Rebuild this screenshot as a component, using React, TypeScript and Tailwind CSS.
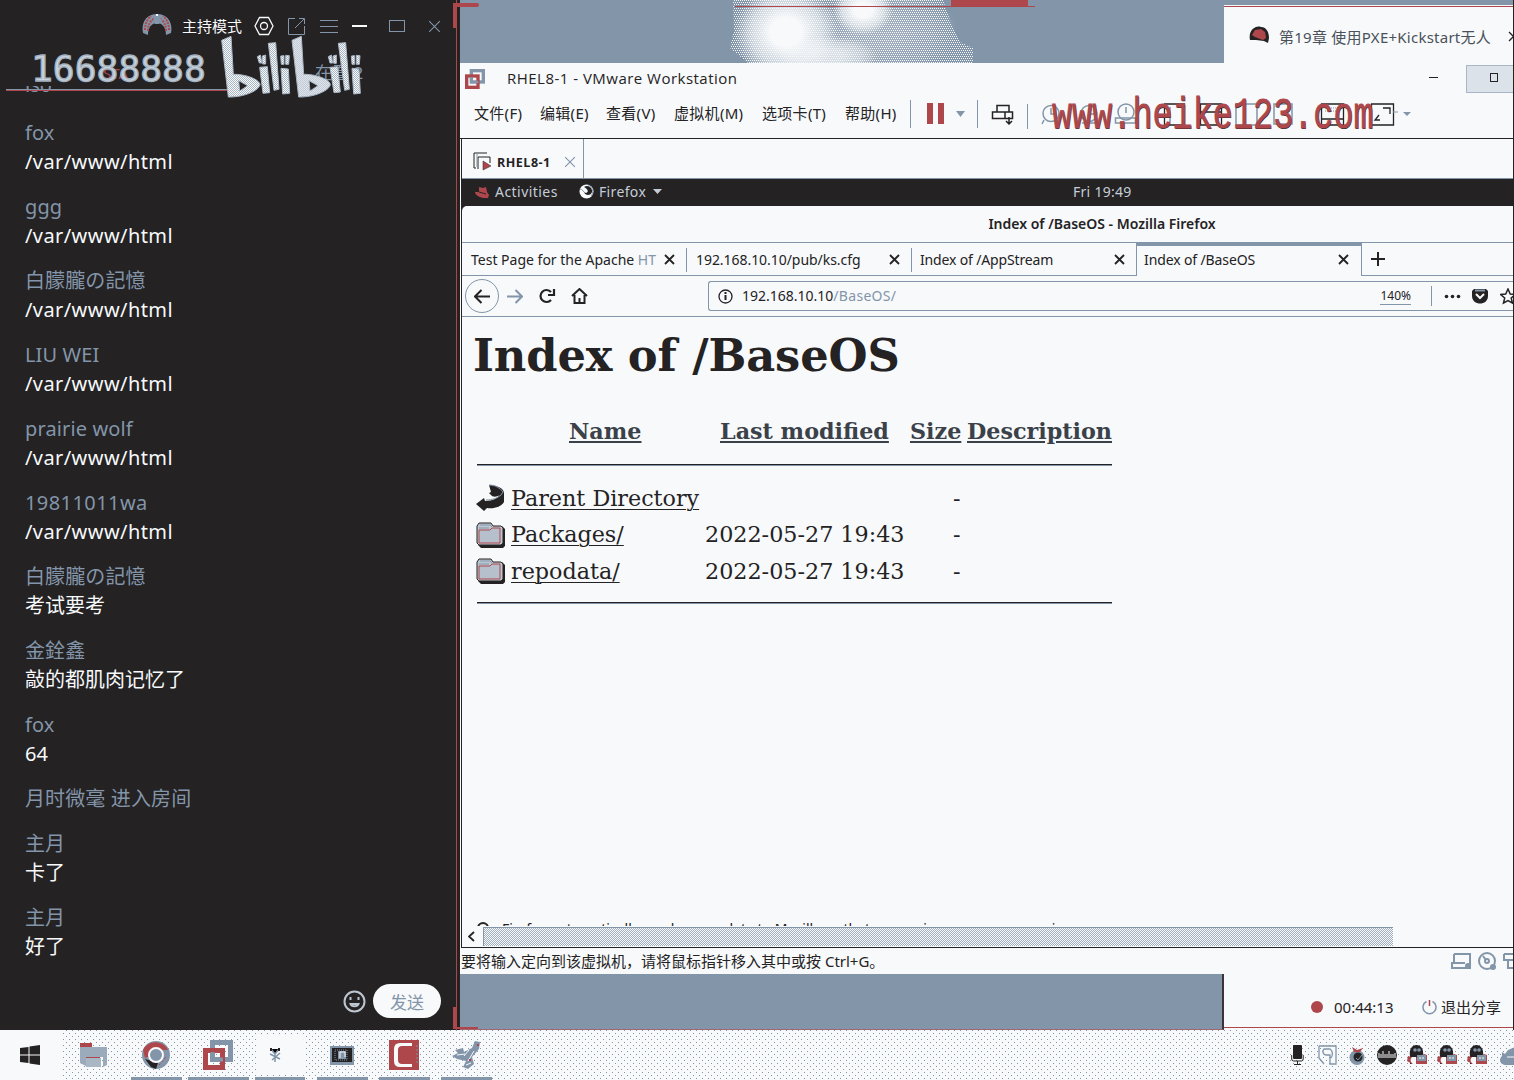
import React from "react";

const messages: { name: string; text?: string }[] = [
  { name: "fox", text: "/var/www/html" },
  { name: "ggg", text: "/var/www/html" },
  { name: "白朦朧の記憶", text: "/var/www/html" },
  { name: "LIU WEI", text: "/var/www/html" },
  { name: "prairie wolf", text: "/var/www/html" },
  { name: "19811011wa", text: "/var/www/html" },
  { name: "白朦朧の記憶", text: "考试要考" },
  { name: "金銓鑫", text: "敲的都肌肉记忆了" },
  { name: "fox", text: "64" },
  { name: "月时微毫 进入房间" },
  { name: "主月", text: "卡了" },
  { name: "主月", text: "好了" },
];

const S = "#8395a9";
const R = "#ad474b";
const D = "#242223";
const W = "#f7f9fb";

function Avatar() {
  return (
    <svg width="30" height="26" viewBox="0 0 30 26">
      <path d="M1 20C-1 10 4 1 15 1s16 9 14 19l-5 2C24 14 20 10 15 10S6 14 6 22z" fill={S} />
      <path d="M3 17C3 10 6 5 9 3M6 18c0-6 2-10 6-12M27 17c0-7-3-12-6-14M24 18c0-6-2-10-6-12" stroke={R} strokeWidth="2" strokeDasharray="2 1" fill="none" />
      <path d="m11 7 4-5 5 5-3 4h-4z" fill={S} />
      <path d="M15 1v2" stroke={W} strokeWidth="2" />
    </svg>
  );
}

function LogoB({ x }: { x: number }) {
  return (
    <path
      transform={`translate(${x} 0)`}
      fillRule="evenodd"
      d="M2 13 30 1 37 115C72 114 115 130 117 145C116 163 70 184 22 183ZM53 134 80 149 56 165Z"
    />
  );
}

function BiliLogo() {
  return (
    <svg width="142" height="64" viewBox="0 0 426 192">
      <defs>
        <pattern id="weave" width="6" height="6" patternUnits="userSpaceOnUse">
          <rect width="6" height="6" fill="#a9b6c4" />
          <rect width="3" height="3" fill={W} />
          <rect x="3" y="3" width="3" height="3" fill={W} />
        </pattern>
      </defs>
      <g fill="url(#weave)" stroke="#a9b6c4" strokeWidth="3">
        <LogoB x={0} />
        <LogoB x={211} />
        <path d="m142 22 22-2 10 140-15 3zM116 94l23-2 7 78-20 2zM109 62l9-5 5 24h-8zM124 60l10-3v27h-9zM180 97l22 2 4 73-21 2zM179 60l10-1v26h-8zM194 58l11 1-2 26h-9z" />
        <path d="m352 22 22-2 11 140-14 3zM327 94l23-2 8 76-19 2zM322 62l9-5 4 24h-8zM336 60l10-3v25h-8zM393 97l21 2 4 73-20 2zM391 60l10-1v26h-8zM406 58l11 1-2 26h-9z" />
      </g>
    </svg>
  );
}

function Cloud() {
  return (
    <svg width="245" height="63" viewBox="0 0 245 63" className="ml-[268px]">
      <defs>
        <pattern id="grain" width="4" height="4" patternUnits="userSpaceOnUse">
          <rect width="1" height="1" fill={W} />
          <rect x="2" width="1" height="1" fill={W} />
          <rect x="1" y="2" width="1" height="1" fill={W} />
          <rect x="3" y="2" width="1" height="1" fill={W} />
        </pattern>
        <radialGradient id="glow">
          <stop offset="0.3" stopColor={W} />
          <stop offset="0.7" stopColor={W} stopOpacity="0.6" />
          <stop offset="1" stopColor={W} stopOpacity="0" />
        </radialGradient>
      </defs>
      <path d="M5 0H215L222 20 232 42 245 48V63H20L2 48 6 30z" fill="url(#grain)" />
      <ellipse cx="58" cy="32" rx="52" ry="48" fill="url(#glow)" />
      <ellipse cx="135" cy="10" rx="30" ry="25" fill="url(#glow)" />
      <ellipse cx="100" cy="56" rx="50" ry="20" fill="url(#glow)" opacity="0.7" />
      <ellipse cx="150" cy="32" rx="80" ry="50" fill="url(#glow)" opacity="0.25" />
    </svg>
  );
}

function VmLogo({ size }: { size: number }) {
  return (
    <svg width={size} height={size} viewBox="0 0 30 30" fill="none">
      <rect x="9.5" y="2.5" width="18" height="17" stroke={S} strokeWidth="5" />
      <rect x="2.5" y="10.500" width="17" height="17" stroke={R} strokeWidth="5" />
      <path d="M9.500 12V19.500H20" stroke={S} strokeWidth="4" />
    </svg>
  );
}

function RedHat({ dark }: { dark?: boolean }) {
  return dark ? (
    <svg width="21" height="18" viewBox="0 0 21 18">
      <path d="M1 14C-1 5 6-1 12 1c6 0 8 6 8 11l-1 5-4-2-8-1z" fill={D} />
      <path d="m6 4 6-1 4 3 1 6-3 2-8-3-3-2z" fill={R} />
    </svg>
  ) : (
    <svg width="14" height="12" viewBox="0 0 14 12">
      <path d="m4 1 4 1 3-1 1 5 2 3-1 3H8C4 11 0 9 0 6h4z" fill={R} />
      <path d="m4 6 7 2" stroke={D} strokeWidth="1" />
    </svg>
  );
}

function CloseX({ c = D, s = 11, w = 2 }: { c?: string; s?: number; w?: number }) {
  return (
    <svg width={s} height={s} viewBox="0 0 11 11" className="shrink-0">
      <path d="m1 1 9 9M10 1l-9 9" stroke={c} strokeWidth={w} />
    </svg>
  );
}

function FolderIcon() {
  return (
    <svg width="29" height="26" viewBox="0 0 29 26">
      <path d="M4 5 2 23l3 3h22l2-2V7l-3-3H17z" fill={D} />
      <path d="M1 4 3 1h12l2 3h8l2 2v15l-2 2H3l-2-2z" fill="#bdc7d1" stroke={D} />
      <path d="M3 8V21h21V6h-8l-2 2z" fill="#b5c0cc" stroke={R} />
      <path d="M4 3h10l2 2M3 6h10" stroke={S} fill="none" />
    </svg>
  );
}

function BackIcon() {
  return (
    <svg width="29" height="28" viewBox="0 0 29 28">
      <path d="M13 1c7 0 15 3 15 8v9c-3 5-10 7-17 6l-3 3-8-7 8-6 1 3c8 0 12-3 15-6-3 2-7 2-8 1l-3-3 2-1z" fill={D} />
      <path d="M13 1c6 0 11 3 14 7l-2 3c-3 3-9 5-15 5" stroke={S} fill="none" />
    </svg>
  );
}

const menus: [string, string][] = [
  ["文件(F)", "w-[66px]"],
  ["编辑(E)", "w-[66px]"],
  ["查看(V)", "w-[68px]"],
  ["虚拟机(M)", "w-[88px]"],
  ["选项卡(T)", "w-[83px]"],
  ["帮助(H)", "w-[65px]"],
];

function ToolIcons() {
  return (
    <svg width="445" height="32" viewBox="0 0 445 32" fill="none" stroke={S} strokeWidth="1.500" className="shrink-0">
      <g stroke={D}>
        <path d="M26 14V7.500h12V14M21.500 14h20v6.500h-20zM34 14v6M38 19v7M35 23l3 3 3-3" />
      </g>
      <path d="M56.500 6v25" strokeWidth="1" />
      <circle cx="80" cy="15.500" r="8" />
      <path d="M80 10v6h5M73 22l-2 4" />
      <circle cx="118" cy="15.500" r="8" />
      <path d="M118 10v6h5M111 25h16" />
      <circle cx="155" cy="14" r="8" />
      <path d="M155 9v6M144.500 20h20v5h-20z" />
      <g stroke={D} strokeWidth="1.300">
        <path d="M193.500 6h20v21h-20zM229.500 6h21v21h-21zM229.500 14h21" />
        <path d="M350.500 6h22v21h-22zM350.500 21h22M400.500 6h22v21h-22zM412 10h7v6M408 17l-4 5h5" />
      </g>
      <path d="M265 6h21v21h-21zM273 6v21M303 6h18v20h-18zM199 9v16" />
      <path d="M354 10h14M354 13h14" strokeDasharray="1 1" strokeWidth="1" />
      <path d="M422 14h5" strokeWidth="1" />
      <path d="M432 14h8l-4 4z" fill={S} stroke="none" />
    </svg>
  );
}

function TitleBar() {
  return (
    <div className="flex h-[31px] items-center bg-[#f7f9fb] rounded-tl-[3px] pl-[5px]">
      <VmLogo size={20} />
      <span className="ml-[22px] whitespace-nowrap font-['Open_Sans'] text-[15px] tracking-[0.48px]">
        RHEL8-1 - VMware Workstation
      </span>
      <span className="ml-auto mr-[28px] -translate-y-px h-px w-[9px] bg-[#242223]" />
      <span className="flex h-[28px] w-[47px] items-center border border-r-0 border-[#a9b6c4] bg-[#dce2e9] pl-[23px] pb-[3px]">
        <span className="h-[9px] w-[8px] border border-[#242223]" />
      </span>
    </div>
  );
}

function MenuBar() {
  return (
    <div className="relative flex h-[45px] items-center overflow-hidden border-b border-[#242223] bg-[#f7f9fb] pl-[14px] pb-[5px]">
      {menus.map(([m, w]) => (
        <span key={m} className={`${w} shrink-0 whitespace-nowrap text-[15px] tracking-[0.3px]`}>
          {m}
        </span>
      ))}
      <span className="h-7 w-px bg-[#8395a9]" />
      <span className="ml-[16px] h-[21px] w-[6px] bg-[#ad474b]" />
      <span className="ml-[5px] h-[21px] w-[6px] bg-[#ad474b]" />
      <svg width="9" height="6" className="ml-[12px]">
        <path d="M0 0h9L4.500 6z" fill={S} />
      </svg>
      <span className="ml-[12px] mr-[-7px] h-7 w-px shrink-0 bg-[#8395a9]" />
      <ToolIcons />
      <span className="absolute left-[592px] top-[2px] origin-center scale-y-[1.3] whitespace-nowrap font-['Liberation_Mono'] text-[33.500px] leading-[40px] text-[#ad474b] [-webkit-text-stroke:0.600px_#ad474b] [text-shadow:0.500px_1px_0_#242223]">
        www.heike123.com
      </span>
    </div>
  );
}

const tabs = [
  ["Test Page for the Apache HT", "pl-[9px]"],
  ["192.168.10.10/pub/ks.cfg", "pl-[9px] tracking-[-0.050px]"],
  ["Index of /AppStream", "pl-[8px] tracking-[-0.150px]"],
  ["Index of /BaseOS", "pl-[7px] tracking-[-0.120px]"],
];

function Firefox() {
  return (
    <>
      <div className="flex h-[28px] shrink-0 items-center border-t border-[#8395a9] bg-[#242223] pb-[2px] font-['Noto_Sans'] text-[14px] text-[#c5ced8]">
        <span className="ml-[13px]"><RedHat /></span>
        <span className="ml-[6px] w-[84px] tracking-[0.45px]">Activities</span>
        <svg width="15" height="15" viewBox="0 0 15 15">
          <circle cx="7.500" cy="7.500" r="7" fill={W} />
          <path d="M5 3c4-3 9 1 8 5-1 4-7 4-8 0l2 1c3-1 2-4-2-6z" fill={D} />
          <path d="M1 5c2 0 3 2 4 3M9 1c5 2 6 8 3 11" stroke={S} fill="none" />
        </svg>
        <span className="ml-[5px] w-[54px] tracking-[0.35px]">Firefox</span>
        <svg width="9" height="5"><path d="M0 0h9L4.500 5z" fill="#c5ced8" /></svg>
        <span className="ml-[411px] tracking-[0.28px]">Fri 19:49</span>
      </div>
      <div className="shrink-0 bg-[#242223]">
        <div className="flex h-[36px] items-center justify-center rounded-tl-[5px] bg-[#f7f9fb] pb-[2px] pl-[229px]">
          <span className="whitespace-nowrap font-['Noto_Sans'] text-[14px] font-semibold">
            Index of /BaseOS - Mozilla Firefox
          </span>
        </div>
      </div>
      <div className="flex h-[34px] shrink-0 border-y border-[#8395a9] font-['Noto_Sans'] text-[14px]">
        {tabs.map(([t, cls], i) => (
          <div
            key={t}
            className={`flex w-[225px] shrink-0 items-center justify-between pr-[12px] ${cls} ${
              i === 3 ? "-ml-px -mb-px w-[226px] border-x border-[#8395a9] bg-[#f7f9fb] shadow-[inset_0_3px_0_#8395a9]" : "relative"
            }`}
          >
            <span>{i === 0 ? (<>Test Page for the Apache <span className="text-[#8395a9]">HT</span></>) : t}</span>
            <CloseX s={11} w={1.8} />
            {i < 2 && <span className="absolute right-0 top-[5px] h-6 w-px bg-[#8395a9]" />}
          </div>
        ))}
        <svg width="14" height="14" viewBox="0 0 14 14" className="ml-[9px] mt-[9px]">
          <path d="M7 0v14M0 7h14" stroke={D} strokeWidth="2" />
        </svg>
      </div>
      <div className="flex h-[41px] shrink-0 items-center border-b border-[#8395a9] font-['Noto_Sans'] text-[14px]">
        <span className="ml-[3px] flex h-[34px] w-[34px] items-center justify-center rounded-full border border-[#8395a9]">
          <svg width="16" height="15" viewBox="0 0 16 15" fill="none" stroke={D} strokeWidth="2"><path d="M1 7.500h15M7.500 1 1 7.500 7.500 14" /></svg>
        </span>
        <svg width="16" height="15" viewBox="0 0 16 15" fill="none" stroke={S} strokeWidth="2" className="ml-2"><path d="M0 7.500h15M8.500 1 15 7.500 8.500 14" /></svg>
        <svg width="17" height="16" viewBox="0 0 17 16" fill="none" stroke={D} strokeWidth="2.200" className="ml-4"><path d="M12 12a6 6 0 1 1 0-8M15 1v6H9" /></svg>
        <svg width="17" height="16" viewBox="0 0 17 16" fill="none" stroke={D} strokeWidth="2" className="ml-[15px]"><path d="m1 8 7.500-7L16 8M3.500 7v8h10V7M8.500 10v5" /></svg>
        <div className="ml-[120px] flex h-[30px] flex-1 items-center rounded-l-[3px] border border-r-0 border-[#8395a9] pl-[9px]">
          <svg width="15" height="15" viewBox="0 0 15 15" fill="none" stroke={D}><circle cx="7.500" cy="7.500" r="6.500" strokeWidth="1.300" /><path d="M7.500 3v2M7.500 6v5" strokeWidth="2" /></svg>
          <span className="ml-[9px] pb-px">192.168.10.10<span className="tracking-[0.3px] text-[#8395a9]">/BaseOS/</span></span>
          <span className="ml-auto border-b border-[#8395a9] text-[12px] leading-[17px]">140%</span>
          <span className="ml-[20px] h-5 w-px bg-[#8395a9]" />
          <svg width="17" height="5" className="ml-3"><g fill={D}><circle cx="2.500" cy="2.500" r="1.800" /><circle cx="8.500" cy="2.500" r="1.800" /><circle cx="14.500" cy="2.500" r="1.800" /></g></svg>
          <svg width="16" height="15" viewBox="0 0 16 15" className="ml-[11px]"><path d="M2 0h12l2 2v5c0 10-16 10-16 0V2z" fill={D} /><path d="m4 5 4 4 4-4" stroke={W} strokeWidth="2" fill="none" /><path d="M3 1.500h10" stroke={S} strokeWidth="2" /></svg>
          <svg width="13" height="17" viewBox="0 0 13 17" className="ml-3" fill="none" stroke={D} strokeWidth="1.500"><path d="m8 1 2.200 5 5 .5-4 3.500 1.200 5L8 12.500 3.500 15l1.200-5-4-3.500 5-.5z" /></svg>
        </div>
      </div>
    </>
  );
}

function Row({ icon, name, date }: { icon: React.ReactNode; name: string; date?: string }) {
  return (
    <div className="flex h-[36.500px] items-center">
      <span className="w-[35px] shrink-0">{icon}</span>
      <span className="w-[194px] shrink-0 whitespace-nowrap"><span className="underline decoration-1 underline-offset-[3px]">{name}</span></span>
      <span className="w-[248px] shrink-0 whitespace-nowrap">{date}</span>
      <span>-</span>
    </div>
  );
}

function Page() {
  return (
    <div className="relative flex min-h-0 flex-1 flex-col overflow-hidden bg-[#f7f9fb] font-['DejaVu_Serif'] text-[22.250px] text-[#242223]">
      <h1 className="ml-[11px] mt-[12px] whitespace-nowrap text-[44.800px] font-bold leading-[53px] tracking-[-0.130px]">Index of /BaseOS</h1>
      <div className="mt-[34px] flex h-[30px] items-center whitespace-nowrap pl-[107px] font-bold leading-[30px] text-[#3b4149]">
        <span className="w-[151px] underline decoration-2 underline-offset-2">Name</span>
        <span className="w-[190px]"><span className="underline decoration-2 underline-offset-2">Last modified</span></span>
        <span className="w-[57px]"><span className="underline decoration-2 underline-offset-2">Size</span></span>
        <span className="underline decoration-2 underline-offset-2">Description</span>
      </div>
      <div className="ml-[15px] mt-[18px] h-[2px] w-[635px] shrink-0 border-t border-[#242223] bg-[#8395a9]" />
      <div className="ml-[14px] mt-[14px]">
        <Row icon={<BackIcon />} name="Parent Directory" />
        <Row icon={<FolderIcon />} name="Packages/" date="2022-05-27 19:43" />
        <Row icon={<FolderIcon />} name="repodata/" date="2022-05-27 19:43" />
      </div>
      <div className="ml-[15px] mt-[12px] h-[2px] w-[635px] shrink-0 border-t border-[#242223] bg-[#8395a9]" />
      <div className="mt-auto flex h-[5px] shrink-0 items-start gap-3 overflow-hidden pl-[14px] font-['Noto_Sans'] text-[14px] leading-[14px]">
        <svg width="14" height="14" className="shrink-0"><circle cx="7" cy="7" r="5" fill="none" stroke={D} strokeWidth="2" /></svg>
        <span className="mt-[1px] whitespace-nowrap">Firefox automatically sends some data to Mozilla so that we can improve your experience.</span>
      </div>
    </div>
  );
}

function ChatPanel() {
  return (
    <aside className="relative flex w-[455px] shrink-0 flex-col bg-[#242223]">
      <div className="flex h-[52px] items-center pl-[142px] text-[#f7f9fb]">
        <Avatar />
        <span className="ml-[10px] text-[15px] leading-[20px] pb-px">主持模式</span>
        <svg width="20" height="20" viewBox="0 0 20 20" className="ml-[12px]" fill="none" stroke={W} strokeWidth="1.300"><path d="M5.500 1.500h9L19 10l-4.500 8.500h-9L1 10z" /><circle cx="10" cy="10" r="3.500" /></svg>
        <svg width="19" height="19" viewBox="0 0 19 19" className="ml-[13px]" fill="none" stroke={S}><path d="M8 1.500H1.500v16h16V9M12 1.500h5.500V7M17 2 8 11" /></svg>
        <svg width="18" height="15" className="ml-[14px]" stroke={S}><path d="M0 1.500h18M0 7.500h18M0 13.500h18" /></svg>
        <span className="ml-[14px] h-[2px] w-[15px] bg-[#f7f9fb]" />
        <span className="ml-[22px] h-[12px] w-[16px] border border-[#8395a9]" />
        <span className="ml-[23px]"><CloseX c={S} s={13} w={0.9} /></span>
      </div>
      <div className="ml-[25px] mt-[34px] h-[11px] overflow-hidden text-[20px] text-[#8395a9]"><div className="-mt-[11px] leading-[20px]">iso</div></div>
      <div className="mt-[21px] flex flex-col gap-4 pl-[25px] text-[20px] leading-[29px]">
        {messages.map((m, i) => (
          <div key={i} className="whitespace-nowrap">
            <div className={`text-[#8395a9] ${m.name.startsWith("1981") ? "tracking-[0.42px]" : "tracking-[0.12px]"}`}>{m.name}</div>
            {m.text && <div className={`text-[#f7f9fb] ${m.text.startsWith("/") ? "tracking-[0.42px]" : ""}`}>{m.text}</div>}
          </div>
        ))}
      </div>
      <div className="absolute left-[343px] top-[984px] flex items-center">
        <svg width="23" height="23" viewBox="0 0 23 23" fill="none" stroke="#bcc6d1" strokeWidth="2"><circle cx="11.500" cy="11.500" r="10" /><path d="M7.500 14c1 3 7 3 8 0zM7.500 7v3M15.500 7v3" /></svg>
        <button className="ml-[7px] h-[34px] w-[68px] rounded-full bg-[#f7f9fb] pt-[3px] text-[17px] text-[#8395a9]">发送</button>
      </div>
      <span className="absolute left-[103px] top-[65px] text-[15px] leading-4 text-[#ad474b]">STA</span>
      <span className="absolute left-[315px] top-[64px] whitespace-nowrap text-[17px] leading-[18px] text-[#8395a9]">在看 2</span>
      <span className="absolute left-[31px] top-[48px] font-['DejaVu_Sans_Mono'] text-[36.300px] leading-[42px] text-[#c9d2db] [-webkit-text-stroke:1.300px_#a3b1c0]">16688888</span>
      <span className="absolute left-[6px] top-[89px] h-[2px] w-[223px] border-b border-[#ad474b] bg-[#8395a9]" />
      <span className="absolute left-[221px] top-[36px]"><BiliLogo /></span>
    </aside>
  );
}

const appIcons: { icon: React.ReactNode; bar?: string }[] = [
  { icon: <svg width="20" height="20" viewBox="0 0 20 20" fill={D}><path d="M0 3 8.500 2v7.500H0zM9.500 1.500 20 0v9.500H9.500zM0 10.500h8.500V18L0 17zM9.500 10.500H20V20L9.500 18.500z" /></svg> },
  { icon: <svg width="28" height="26" viewBox="0 0 28 26"><path d="M0 1h12v4h15v18l-4 2V15H6v9l-6-3z" fill="#9babbb" /><path d="M0 1h12v4H0zM6 15h14v1H6z" fill={R} /><path d="M6 16h15v9H6z" fill="#a9b6c4" /></svg> },
  { icon: <svg width="28" height="28" viewBox="0 0 28 28"><circle cx="14" cy="14" r="14" fill={S} /><path d="M1 9a14 14 0 0 1 25 0H14c-4 0-5 3-6 6l-5 2z" fill={R} /><path d="m3 18 6 8 5 2 2-6-6-2z" fill={D} /><path d="m17 24 7-8" stroke={R} strokeDasharray="2 2" /><circle cx="14" cy="14" r="7" fill={S} stroke={W} strokeWidth="2" /></svg>, bar: "w-[51px]" },
  { icon: <VmLogo size={30} />, bar: "w-[61px]" },
  { icon: <svg width="48" height="40" viewBox="0 0 48 40"><rect width="48" height="40" rx="5" fill={W} /><path d="m15 14 4 5 4-5M14 19l10 5M24 18l-8 7M19 18v9" stroke={S} strokeWidth="1.500" /><path d="M15 13v3M23 13v3" stroke={D} strokeWidth="2" /></svg>, bar: "w-[50px]" },
  { icon: <svg width="24" height="19" viewBox="0 0 24 19"><rect width="24" height="19" fill={S} /><path d="M2 2h20v14H2z" fill={D} /><path d="M5 4h12v10H5z" stroke={S} strokeDasharray="1 1" fill="none" /><path d="M8 5h8v8H8z" fill={S} /><path d="M10 6h5v5M10 6v6" stroke={W} fill="none" /></svg>, bar: "w-[51px]" },
  { icon: <svg width="30" height="30" viewBox="0 0 30 30"><rect width="30" height="30" fill={R} /><path d="M23 3H11Q5 3 5 9v12q0 6 6 6h12v-3H13q-4 0-4-4V10q0-4 4-4h10z" fill={W} /><path d="M28 5v20" stroke={S} strokeDasharray="2 2" /></svg>, bar: "w-[51px]" },
  { icon: <svg width="29" height="28" viewBox="0 0 29 28"><path d="M23 0 28 1 27 8 20 16 22 23 16 28 11 26 14 20 5 18 0 15 6 12 3 9 11 7 12 11 20 7z" fill={S} /><path d="m17 9-5 6M22 10l-6 10M5 14l8-1M14 24l5-2" stroke={W} /><path d="M25 4h2M17 19h2" stroke={R} strokeWidth="2" /></svg>, bar: "w-[51px]" },
];

function QQ() {
  return (
    <svg width="20" height="20" viewBox="0 0 20 20"><path d="M3 11C2 4 5 0 9.500 0s7.500 4 6.500 11l1 8H3z" fill={D} /><path d="m1 11 7 2 9-4 3 1v9H5l-5-3z" fill={R} /><path d="M5 12h4v7H6c-3-2-3-5-1-7z" fill={W} /><circle cx="8" cy="5" r="1.800" fill={S} /><circle cx="12" cy="5" r="1.800" fill={S} /><path d="M10 10h9v6h-9z" fill={S} /><path d="M12 13h6" stroke={W} strokeDasharray="2 1" /></svg>
  );
}

const tray: React.ReactNode[] = [
  <svg width="13" height="20" viewBox="0 0 13 20"><rect x="2" width="9" height="14" rx="1" fill={D} /><path d="M.7 10v4q0 2 2 2h7.500q2 0 2-2v-4M6.500 16v3M3 19.500h7" stroke={D} fill="none" /></svg>,
  <svg width="20" height="20" viewBox="0 0 20 20"><path d="M2 1h17v18h-6V10H9c-3 0-4-4-2-6h6c3 2 3 6 1 9M2 1v12l5 6" stroke={S} strokeWidth="1.300" fill={W} /></svg>,
  <svg width="16" height="19" viewBox="0 0 16 19"><circle cx="8" cy="11.500" r="7.500" fill={S} /><circle cx="9" cy="11" r="4.500" fill={D} /><path d="m7 12 2 2 4-5" stroke={S} fill="none" /><path d="m3 1 5 3 6-2-3 4H5z" fill={R} /></svg>,
  <svg width="20" height="20" viewBox="0 0 20 20"><circle cx="10" cy="10" r="10" fill={D} /><path d="M2 8v5M4 9v4M6 6v7M8 9v4M10 9v4M12 6v7M14 9v4M16 9v4M18 8v5" stroke={W} /></svg>,
  <QQ />,
  <QQ />,
  <QQ />,
  <svg width="15" height="19" viewBox="0 0 15 19"><path d="M2 6 5 8l3-4 7-3v18H5c-6-1-6-6-3-9z" fill={S} /><path d="M7 11h8" stroke={W} /></svg>,
];

export default function App() {
  return (
    <div className="flex h-[1080px] w-[1514px] flex-col overflow-hidden bg-[#f7f9fb] font-['Noto_Sans','Noto_Sans_CJK_SC',sans-serif] text-[#242223]">
      <div className="flex h-[1030px]">
        <ChatPanel />
        <div className="relative w-[5px] shrink-0 bg-[#242223]">
          <span className="absolute left-[1px] top-0 h-full w-px bg-[#ad474b]" />
          <span className="absolute -left-[2px] top-[3px] z-10 h-[25px] w-[4px] bg-[#ad474b]" />
          <span className="absolute -left-[2px] top-[3px] z-10 h-[4px] w-[26px] rounded-r-sm bg-[#ad474b]" />
          <span className="absolute -left-[2px] top-[1007px] z-10 h-[22px] w-[4px] bg-[#ad474b]" />
          <span className="absolute -left-[2px] top-[1027px] z-10 h-[2px] w-[25px] bg-[#ad474b]" />
        </div>
        <main className="flex w-[1053px] flex-col">
          <div className="flex h-[63px] shrink-0 bg-[#8395a9]">
            <div className="relative w-[764px]">
              <Cloud />
              <span className="absolute left-[275px] top-[6px] h-px w-[300px] bg-[#ad474b]" />
              <span className="absolute left-[491px] top-0 h-[7px] w-[77px] bg-[#ad474b]" />
            </div>
            <div className="relative mt-[5px] flex flex-1 items-center bg-[#f7f9fb] pl-[25px] pt-[2px] shadow-[inset_0_1px_0_#f7f9fb,inset_0_2px_0_#ad474b]">
              <RedHat dark />
              <span className="ml-[9px] whitespace-nowrap pt-[5px] text-[15px] tracking-[0.25px] text-[#4a5159]">第19章 使用PXE+Kickstart无人</span>
              <span className="absolute right-[-6px] top-[26px]"><CloseX s={11} w={1.3} /></span>
            </div>
          </div>
          <TitleBar />
          <div className="flex h-[880px] shrink-0 flex-col bg-[#f7f9fb]">
            <MenuBar />
            <div className="ml-px flex h-[809px] flex-col border-l border-[#242223]">
              <div className="flex h-[39px] shrink-0">
                <div className="flex w-[122px] items-center border-r border-[#8395a9] pl-[11px] pt-[6px]">
                  <svg width="19" height="19" viewBox="0 0 19 19" fill="none" stroke={D}><path d="M14 1H1v15h2M5 17V5h12v6" /><path d="M4 1v14" stroke={S} /><path d="m10 9 8 5-8 4z" fill={R} stroke={D} strokeWidth=".5" /></svg>
                  <span className="ml-[5px] pt-[3px] font-['Open_Sans'] text-[12.500px] font-bold tracking-[0.5px]">RHEL8-1</span>
                  <span className="ml-[13px]"><CloseX c={S} s={12} w={1} /></span>
                </div>
              </div>
              <Firefox />
              <Page />
              <div className="flex h-[22px] shrink-0 items-center border-b border-[#242223]">
                <svg width="7" height="11" viewBox="0 0 7 11" className="ml-[6px]"><path d="M6 1 1 5.500 6 10" stroke={D} strokeWidth="1.800" fill="none" /></svg>
                <span className="ml-[8px] h-[19px] w-[910px] border-l border-t border-[#8395a9] bg-[#f7f9fb] bg-[conic-gradient(#a0aebe_25%,transparent_0_50%,#a0aebe_0_75%,transparent_0)] bg-[length:2px_2px]" />
              </div>
            </div>
            <div className="flex flex-1 items-center pl-[1px] text-[15px]">
              <span className="whitespace-nowrap">要将输入定向到该虚拟机，请将鼠标指针移入其中或按 Ctrl+G。</span>
              <svg width="62" height="20" viewBox="0 0 62 20" className="ml-auto" fill="none" stroke={S} strokeWidth="2"><path d="M3 3h16v14H1v-5h13M3 3v9" /><circle cx="17" cy="15" r="3" fill={S} stroke="none" /><circle cx="36" cy="10" r="8" /><circle cx="36" cy="10" r="2" /><path d="m32 5 3 4" /><circle cx="42" cy="16" r="3" fill={S} stroke="none" /><path d="M53 3h10M53 3v6h10M57 9v8h6" /></svg>
            </div>
          </div>
          <div className="flex flex-1">
            <div className="w-[764px] border-b border-[#a1666f] border-r-2 border-r-[#3c3439] bg-[#8395a9]" />
            <div className="mb-[2px] flex flex-1 items-center border-b border-[#ad474b] bg-[#f7f9fb] pl-[87px] pt-[13px] text-[15px]">
              <span className="h-[12px] w-[12px] rounded-full bg-[#ad474b]" />
              <span className="ml-[11px] w-[88px]">00:44:13</span>
              <svg width="15" height="15" viewBox="0 0 15 15" fill="none" stroke={S} strokeWidth="1.500"><path d="M4.500 1.500a6.500 6.500 0 1 0 6 0" /><path d="M7.500 0v6" stroke={R} /></svg>
              <span className="ml-[4px] whitespace-nowrap">退出分享</span>
            </div>
          </div>
        </main>
        <div className="w-px bg-[#242223]" />
      </div>
      <footer className="flex h-[50px] justify-between bg-[conic-gradient(from_270deg_at_1px_1px,#8395a9_25%,transparent_0),conic-gradient(from_270deg_at_1px_1px,#8395a9_25%,transparent_0)] bg-[length:6px_6px] bg-[position:0_0,3px_3px]">
        <div className="flex">
          {appIcons.map((a, i) => (
            <div key={i} className={`relative flex w-[62px] shrink-0 items-center justify-center ${i === 0 ? "-ml-px mr-[2px] bg-[#f7f9fb]" : ""}`}>
              {a.icon}
              {a.bar && <span className={`absolute bottom-0 h-[3px] bg-[#8395a9] ${a.bar}`} />}
            </div>
          ))}
        </div>
        <div className="-mr-[8px] flex">
          {tray.map((t, i) => (
            <span key={i} className="flex w-[30px] items-center justify-center">{t}</span>
          ))}
        </div>
      </footer>
    </div>
  );
}
